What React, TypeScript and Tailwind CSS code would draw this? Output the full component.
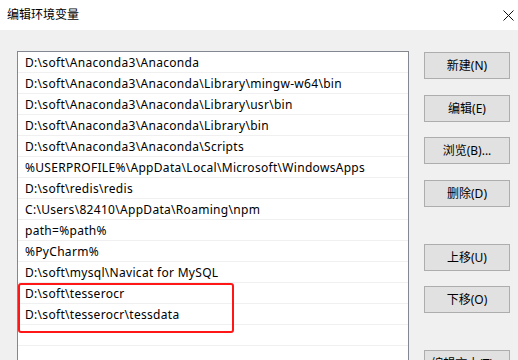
const paths = [
  "D:\\soft\\Anaconda3\\Anaconda",
  "D:\\soft\\Anaconda3\\Anaconda\\Library\\mingw-w64\\bin",
  "D:\\soft\\Anaconda3\\Anaconda\\Library\\usr\\bin",
  "D:\\soft\\Anaconda3\\Anaconda\\Library\\bin",
  "D:\\soft\\Anaconda3\\Anaconda\\Scripts",
  "%USERPROFILE%\\AppData\\Local\\Microsoft\\WindowsApps",
  "D:\\soft\\redis\\redis",
  "C:\\Users\\82410\\AppData\\Roaming\\npm",
  "path=%path%",
  "%PyCharm%",
  "D:\\soft\\mysql\\Navicat for MySQL",
  "D:\\soft\\tesserocr",
  "D:\\soft\\tesserocr\\tessdata",
  "",
  "",
];

// label + top margin, so the gaps between groups match the dialog
const buttons = [
  { label: "新建(N)", mt: "mt-[1px]" },
  { label: "编辑(E)", mt: "mt-[16px]" },
  { label: "浏览(B)...", mt: "mt-[15px]" },
  { label: "删除(D)", mt: "mt-[16px]" },
  { label: "上移(U)", mt: "mt-[37px]" },
  { label: "下移(O)", mt: "mt-[15px]" },
  { label: "编辑文本(T)...", mt: "mt-[37px]" },
];

function CloseIcon() {
  return (
    <svg width="11" height="11" viewBox="0 0 11 11" className="text-[#111]">
      <path d="M0.5 0.5 L10.5 10.5 M10.5 0.5 L0.5 10.5" stroke="currentColor" strokeWidth="1" fill="none" />
    </svg>
  );
}

export default function App() {
  return (
    <div
      className="w-[518px] h-[360px] overflow-hidden flex flex-col bg-[#f0f0f0] text-[12px] text-black"
      style={{ fontFamily: '"Noto Sans", "Noto Sans CJK SC", sans-serif' }}
    >
      <div className="h-[30px] shrink-0 bg-white flex items-center justify-between pl-[7px] pr-[4px]">
        <span className="leading-none">编辑环境变量</span>
        <CloseIcon />
      </div>

      <div className="flex flex-1 pl-[17px] pt-[21px]">
        <div className="relative w-[392px] shrink-0 self-start border border-[#828790] bg-white">
          {paths.map((p, i) => (
            <div
              key={i}
              className="h-[21px] border-b border-[#f0f0f0] pl-[7px] pt-[1px] flex items-center whitespace-nowrap leading-none tracking-[0.3px]"
            >
              {p}
            </div>
          ))}
          <div className="absolute left-0 top-[231px] w-[216px] h-[50px] border-[2.5px] border-[#ff1717] rounded-[3px]" />
        </div>

        <div className="flex flex-col ml-[15px]">
          {buttons.map((b) => (
            <button
              key={b.label}
              className={`${b.mt} w-[86px] h-[27px] shrink-0 bg-[#e1e1e1] border border-[#adadad] flex items-center justify-center leading-none`}
            >
              {b.label}
            </button>
          ))}
        </div>
      </div>
    </div>
  );
}
